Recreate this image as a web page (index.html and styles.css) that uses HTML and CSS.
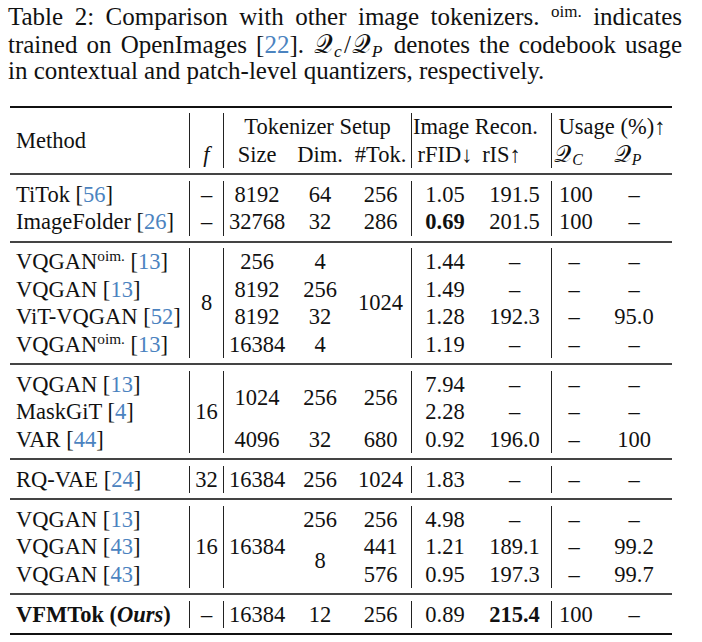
FILE: index.html
```html
<!DOCTYPE html>
<html>
<head>
<meta charset="utf-8">
<link rel="stylesheet" href="styles.css">
</head>
<body>
<div class="page">
<p class="caption">Table 2: Comparison with other image tokenizers. <span class="sup">oim.</span> indicates trained on OpenImages [<span class="ref">22</span>]. <span class="cal">𝒬</span><span class="sub">c</span>/<span class="cal">𝒬</span><span class="sub">P</span> denotes the codebook usage in contextual and patch-level quantizers, respectively.</p>
<table class="tbl">
<colgroup>
<col class="w-method"><col class="w-f"><col class="w-size"><col class="w-dim"><col class="w-tok"><col class="w-fid"><col class="w-is"><col class="w-qc"><col class="w-qp">
</colgroup>
<tbody>
<tr class="rule heavy"><td colspan="9"></td></tr>
<tr class="gap-b"><td colspan="9"></td></tr>
<tr class="row">
<td rowspan="2" class="m vl">Method</td>
<td class="vl"></td>
<td colspan="3" class="vl">Tokenizer Setup</td>
<td colspan="2" class="vl h-recon">Image Recon.</td>
<td colspan="2" class="h-usage">Usage (%)↑</td>
</tr>
<tr class="row">
<td class="vl"><i>f</i></td>
<td>Size</td><td>Dim.</td><td class="vl">#Tok.</td>
<td class="h-fid">rFID↓</td><td class="vl h-is">rIS↑</td>
<td class="h-qc"><span class="cal">𝒬</span><span class="sub">C</span></td><td class="h-qp"><span class="cal">𝒬</span><span class="sub">P</span></td>
</tr>
<tr class="gap-a"><td colspan="9"></td></tr>
<tr class="rule"><td colspan="9"></td></tr>
<tr class="gap-b"><td colspan="9"></td></tr>

<tr class="row">
<td class="m vl">TiTok [<span class="ref">56</span>]</td><td class="vl">–</td>
<td>8192</td><td>64</td><td class="vl">256</td>
<td>1.05</td><td class="vl">191.5</td><td class="qc">100</td><td>–</td>
</tr>
<tr class="row">
<td class="m vl">ImageFolder [<span class="ref">26</span>]</td><td class="vl">–</td>
<td>32768</td><td>32</td><td class="vl">286</td>
<td><b>0.69</b></td><td class="vl">201.5</td><td class="qc">100</td><td>–</td>
</tr>
<tr class="gap-a"><td colspan="9"></td></tr>
<tr class="rule"><td colspan="9"></td></tr>
<tr class="gap-b"><td colspan="9"></td></tr>

<tr class="row">
<td class="m vl">VQGAN<span class="sup">oim.</span> [<span class="ref">13</span>]</td><td rowspan="4" class="vl">8</td>
<td>256</td><td>4</td><td rowspan="4" class="vl">1024</td>
<td>1.44</td><td class="vl">–</td><td>–</td><td>–</td>
</tr>
<tr class="row">
<td class="m vl">VQGAN [<span class="ref">13</span>]</td>
<td>8192</td><td>256</td>
<td>1.49</td><td class="vl">–</td><td>–</td><td>–</td>
</tr>
<tr class="row">
<td class="m vl">ViT-VQGAN [<span class="ref">52</span>]</td>
<td>8192</td><td>32</td>
<td>1.28</td><td class="vl">192.3</td><td>–</td><td>95.0</td>
</tr>
<tr class="row">
<td class="m vl">VQGAN<span class="sup">oim.</span> [<span class="ref">13</span>]</td>
<td>16384</td><td>4</td>
<td>1.19</td><td class="vl">–</td><td>–</td><td>–</td>
</tr>
<tr class="gap-a"><td colspan="9"></td></tr>
<tr class="rule"><td colspan="9"></td></tr>
<tr class="gap-b"><td colspan="9"></td></tr>

<tr class="row">
<td class="m vl">VQGAN [<span class="ref">13</span>]</td><td rowspan="3" class="vl">16</td>
<td rowspan="2">1024</td><td rowspan="2">256</td><td rowspan="2" class="vl">256</td>
<td>7.94</td><td class="vl">–</td><td>–</td><td>–</td>
</tr>
<tr class="row">
<td class="m vl">MaskGiT [<span class="ref">4</span>]</td>
<td>2.28</td><td class="vl">–</td><td>–</td><td>–</td>
</tr>
<tr class="row">
<td class="m vl">VAR [<span class="ref">44</span>]</td>
<td>4096</td><td>32</td><td class="vl">680</td>
<td>0.92</td><td class="vl">196.0</td><td>–</td><td>100</td>
</tr>
<tr class="gap-a"><td colspan="9"></td></tr>
<tr class="rule"><td colspan="9"></td></tr>
<tr class="gap-b"><td colspan="9"></td></tr>

<tr class="row">
<td class="m vl">RQ-VAE [<span class="ref">24</span>]</td><td class="vl">32</td>
<td>16384</td><td>256</td><td class="vl">1024</td>
<td>1.83</td><td class="vl">–</td><td>–</td><td>–</td>
</tr>
<tr class="gap-a"><td colspan="9"></td></tr>
<tr class="rule"><td colspan="9"></td></tr>
<tr class="gap-b"><td colspan="9"></td></tr>

<tr class="row">
<td class="m vl">VQGAN [<span class="ref">13</span>]</td><td rowspan="3" class="vl">16</td>
<td rowspan="3">16384</td><td>256</td><td class="vl">256</td>
<td>4.98</td><td class="vl">–</td><td>–</td><td>–</td>
</tr>
<tr class="row">
<td class="m vl">VQGAN [<span class="ref">43</span>]</td>
<td rowspan="2">8</td><td class="vl">441</td>
<td>1.21</td><td class="vl">189.1</td><td>–</td><td>99.2</td>
</tr>
<tr class="row">
<td class="m vl">VQGAN [<span class="ref">43</span>]</td>
<td class="vl">576</td>
<td>0.95</td><td class="vl">197.3</td><td>–</td><td>99.7</td>
</tr>
<tr class="gap-a"><td colspan="9"></td></tr>
<tr class="rule"><td colspan="9"></td></tr>
<tr class="gap-b"><td colspan="9"></td></tr>

<tr class="row">
<td class="m vl"><b>VFMTok (<i>Ours</i>)</b></td><td class="vl">–</td>
<td>16384</td><td>12</td><td class="vl">256</td>
<td>0.89</td><td class="vl"><b>215.4</b></td><td class="qc">100</td><td>–</td>
</tr>
<tr class="gap-a"><td colspan="9"></td></tr>
<tr class="rule heavy"><td colspan="9"></td></tr>
</tbody>
</table>
</div>
</body>
</html>
```

FILE: styles.css
```css
html, body {
  margin: 0;
  background: #fff;
}
body {
  font-family: "Liberation Serif", "Times New Roman", serif;
  color: #111;
}
.page {
  padding: 4px 8px 0 8px;
}
.caption {
  margin: 0;
  width: 674px;
  font-size: 25px;
  line-height: 26.5px;
  text-align: justify;
}
.ref {
  color: #4b83bf;
}
.sup {
  font-size: 0.68em;
  vertical-align: 0.5em;
  line-height: 0;
}
.cal {
  font-family: "DejaVu Serif", "DejaVu Sans", serif;
  font-size: 1.05em;
  font-weight: normal;
  margin-left: 1px;
  margin-right: 1px;
}
.sub {
  font-size: 0.7em;
  font-style: italic;
  vertical-align: -0.25em;
  line-height: 0;
  margin-right: 2px;
}
.tbl {
  margin: 21px 0 0 2px;
  border-collapse: separate;
  border-spacing: 0;
  table-layout: fixed;
  width: 662px;
  font-size: 22.5px;
}
.w-method { width: 180px; }
.w-f { width: 34px; }
.w-size { width: 66px; }
.w-dim { width: 60px; }
.w-tok { width: 62px; }
.w-fid { width: 66px; }
.w-is { width: 74px; }
.w-qc { width: 44px; }
.w-qp { width: 76px; }
.tbl td {
  padding: 0;
  text-align: center;
  white-space: nowrap;
  vertical-align: middle;
}
.tbl tr.row td {
  height: 27.5px;
  line-height: 27.5px;
}
.tbl tr.gap-b td {
  height: 5.5px;
  font-size: 0;
  line-height: 0;
}
.tbl tr.gap-a td {
  height: 5px;
  font-size: 0;
  line-height: 0;
}
.tbl tr.rule td {
  height: 0;
  font-size: 0;
  line-height: 0;
  border-top: 2px solid #444;
}
.tbl tr.rule.heavy td {
  border-top: 2px solid #111;
}
.tbl td.vl {
  border-right: 1px solid #222;
}
.tbl td.m {
  text-align: left;
  padding-left: 6px;
}
.h-recon { padding-right: 12px !important; }
.h-is { padding-right: 26px !important; }
.h-qc { padding-right: 10px !important; }
.h-qp { padding-right: 12px !important; }
.qc {
  text-align: left !important;
  padding-left: 7px !important;
}
```
